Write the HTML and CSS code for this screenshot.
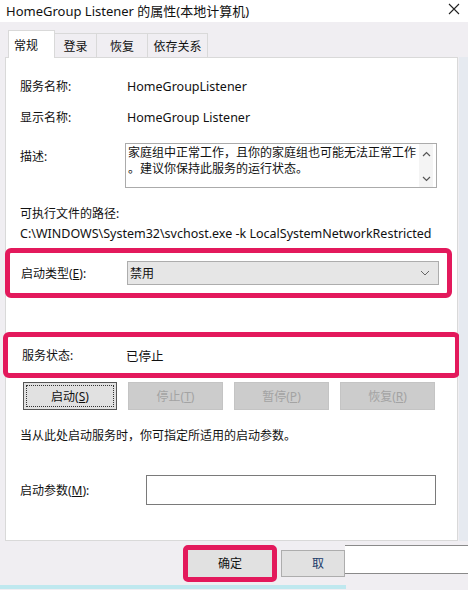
FILE: index.html
```html
<!DOCTYPE html>
<html lang="zh-CN">
<head>
<meta charset="utf-8">
<title>HomeGroup Listener 的属性</title>
<link rel="stylesheet" href="styles.css">
</head>
<body>
<div class="window">
  <div class="titlebar">
    <span class="title">HomeGroup Listener 的属性(本地计算机)</span>
    <svg class="close" width="12" height="12" viewBox="0 0 12 12"><path d="M1 1 L11 11 M11 1 L1 11" stroke="#222" stroke-width="1.1" fill="none"/></svg>
  </div>
  <div class="body">
    <div class="tabs">
      <div class="tab active">常规</div>
      <div class="tab t2">登录</div>
      <div class="tab t3">恢复</div>
      <div class="tab t4">依存关系</div>
    </div>
    <div class="main">
      <div class="panel">
        <div class="row r1"><span class="label">服务名称:</span><span class="value">HomeGroupListener</span></div>
        <div class="row r2"><span class="label">显示名称:</span><span class="value">HomeGroup Listener</span></div>
        <div class="row r3">
          <span class="label lbl-desc">描述:</span>
          <div class="desc">
            <div class="desc-text">家庭组中正常工作，且你的家庭组也可能无法正常工作<br>。建议你保持此服务的运行状态。</div>
            <div class="scroll">
              <svg width="9" height="6" viewBox="0 0 9 6"><path d="M1 5 L4.5 1.5 L8 5" stroke="#555" stroke-width="1.2" fill="none"/></svg>
              <svg width="9" height="6" viewBox="0 0 9 6"><path d="M1 1 L4.5 4.5 L8 1" stroke="#555" stroke-width="1.2" fill="none"/></svg>
            </div>
          </div>
        </div>
        <div class="line l-path-label">可执行文件的路径:</div>
        <div class="line l-path">C:\WINDOWS\System32\svchost.exe -k LocalSystemNetworkRestricted</div>
        <div class="mark mark1">
          <span class="label">启动类型(<u>E</u>):</span>
          <div class="combo"><span>禁用</span>
            <svg width="10" height="6" viewBox="0 0 10 6"><path d="M1 1 L5 5 L9 1" stroke="#666" stroke-width="1" fill="none"/></svg>
          </div>
        </div>
        <div class="mark mark2">
          <span class="label">服务状态:</span><span class="value">已停止</span>
        </div>
        <div class="btns">
          <div class="btn focus"><span class="focus-ring">启动(<u>S</u>)</span></div>
          <div class="btn disabled">停止(<u>T</u>)</div>
          <div class="btn disabled">暂停(<u>P</u>)</div>
          <div class="btn disabled">恢复(<u>R</u>)</div>
        </div>
        <div class="line l-hint">当从此处启动服务时，你可指定所适用的启动参数。</div>
        <div class="row r-param"><span class="label">启动参数(<u>M</u>):</span><div class="input"></div></div>
      </div>
      <div class="edge"></div>
    </div>
    <div class="footer">
      <div class="ok-mark"><div class="btn ok">确定</div></div>
      <div class="btn cancel"><span class="cancel-text">取</span></div>
      <div class="glitch"></div>
    </div>
    <div class="taskline"></div>
  </div>
</div>
</body>
</html>
```

FILE: styles.css
```css
* { box-sizing: border-box; }
html, body { margin: 0; padding: 0; }
body {
  width: 468px;
  height: 590px;
  overflow: hidden;
  font-family: "Noto Sans", "Noto Sans CJK SC", sans-serif;
  font-size: 12px;
  color: #111;
  background: #f0eef2;
}
.window { width: 468px; height: 590px; display: flex; flex-direction: column; }

.titlebar {
  height: 22px;
  background: #fff;
  display: flex;
  align-items: center;
  justify-content: space-between;
  padding: 0 8px 2px 6px;
}
.title { font-size: 13px; color: #111; white-space: nowrap; }
.close { margin-top: -2px; }

.body { flex: 1; display: flex; flex-direction: column; background: #f0eef2; }

.tabs {
  display: flex;
  align-items: flex-end;
  height: 35px;
  padding-left: 8px;
  position: relative;
  z-index: 2;
}
.tab {
  height: 24px;
  border: 1px solid #d9d9d9;
  border-bottom: none;
  border-left: none;
  display: flex;
  align-items: center;
  justify-content: center;
  font-size: 12px;
  margin-bottom: 0;
  background: #f0eef2;
}
.tab.active {
  width: 47px;
  height: 28px;
  background: #fff;
  border-left: 1px solid #d9d9d9;
  margin-bottom: -1px;
  align-items: flex-start;
  padding-top: 5px;
  justify-content: flex-start;
  padding-left: 5px;
}
.t2 { width: 42px; }
.t3 { width: 51px; }
.t4 { width: 60px; }

.main { display: flex; height: 484px; }
.panel {
  margin-left: 5px;
  width: 453px;
  height: 484px;
  background: #fff;
  border: 1px solid #d9d9d9;
  display: flex;
  flex-direction: column;
  padding-top: 18px;
}
.edge { flex: 1; background: #e6eaf0; margin-left: 1px; }

.row { display: flex; align-items: center; padding-left: 14px; }
.label { white-space: nowrap; }
.row .label { width: 107px; flex: none; }
.value { white-space: nowrap; font-size: 12.5px; }
.r1 { height: 20px; }
.r2 { height: 20px; margin-top: 11px; }
.r3 { margin-top: 16px; align-items: flex-start; }
.lbl-desc { padding-top: 5px; line-height: 18px; }
.desc {
  width: 312px;
  height: 45px;
  border: 1px solid #ababab;
  display: flex;
  margin-left: -2px;
}
.desc-text { flex: 1; padding: 1px 0 0 2px; line-height: 16px; font-size: 12px; white-space: nowrap; overflow: hidden; }
.scroll {
  width: 14px;
  flex: none;
  display: flex;
  flex-direction: column;
  justify-content: space-between;
  align-items: center;
  padding: 7px 0 5px;
  background: #f4f4f4;
  margin-right: 3px;
}

.line { padding-left: 14px; white-space: nowrap; line-height: 18px; }
.l-path-label { margin-top: 17px; }
.l-path { margin-top: 2px; font-size: 12.5px; }

.mark {
  border: 5px solid #e3195c;
  border-radius: 6px;
  display: flex;
  align-items: center;
}
.mark1 {
  margin: 5px 5px 0 -1px;
  height: 50px;
  padding-left: 11px;
}
.mark1 .label { width: 106px; }
.combo {
  width: 312px;
  height: 24px;
  background: #e6e6e6;
  border: 1px solid #adadad;
  display: flex;
  align-items: center;
  justify-content: space-between;
  padding: 0 8px 0 2px;
}
.mark2 {
  margin: 34px -3px 0 -3px;
  height: 46px;
  padding-left: 14px;
}
.mark2 .label { width: 104px; }

.btns {
  margin-top: 4px;
  padding-left: 17px;
  display: flex;
  gap: 11px;
}
.btn {
  width: 94px;
  height: 28px;
  display: flex;
  align-items: center;
  justify-content: center;
  background: #e1e1e1;
  border: 1px solid #adadad;
  white-space: nowrap;
}
.btn.focus { border: 1px solid #555; padding: 2px; }
.focus-ring {
  flex: 1;
  align-self: stretch;
  display: flex;
  align-items: center;
  justify-content: center;
  border: 1px dotted #333;
}
.btn.disabled { background: #cccccc; border-color: #c4c4c4; color: #a3a3a3; width: 95px; }

.l-hint { margin-top: 17px; }
.r-param { margin-top: 30px; }
.r-param .label { width: 126px; }
.input { width: 290px; height: 30px; border: 1px solid #7a7a7a; }

.footer {
  height: 44px;
  display: flex;
  align-items: center;
  padding-left: 183px;
  position: relative;
}
.ok-mark {
  width: 94px;
  height: 37px;
  border: 5px solid #e3195c;
  border-radius: 5px;
  background: #e8e8e8;
  display: flex;
}
.btn.ok { width: 100%; height: 100%; border: none; background: #e1e1e1; }
.btn.cancel { width: 64px; height: 27px; margin-left: 4px; justify-content: flex-start; padding-left: 30px; overflow: hidden; }
.cancel-text { color: #1a3a6a; }
.glitch {
  flex: 1;
  align-self: stretch;
  background: #fff;
  border-top: 1px solid #8a8a8a;
  border-bottom: 1px solid #8a8a8a;
  margin: 4px 0 11px;
}
.taskline { height: 4px; background: #bfe8ef; margin-right: 122px; }
```
